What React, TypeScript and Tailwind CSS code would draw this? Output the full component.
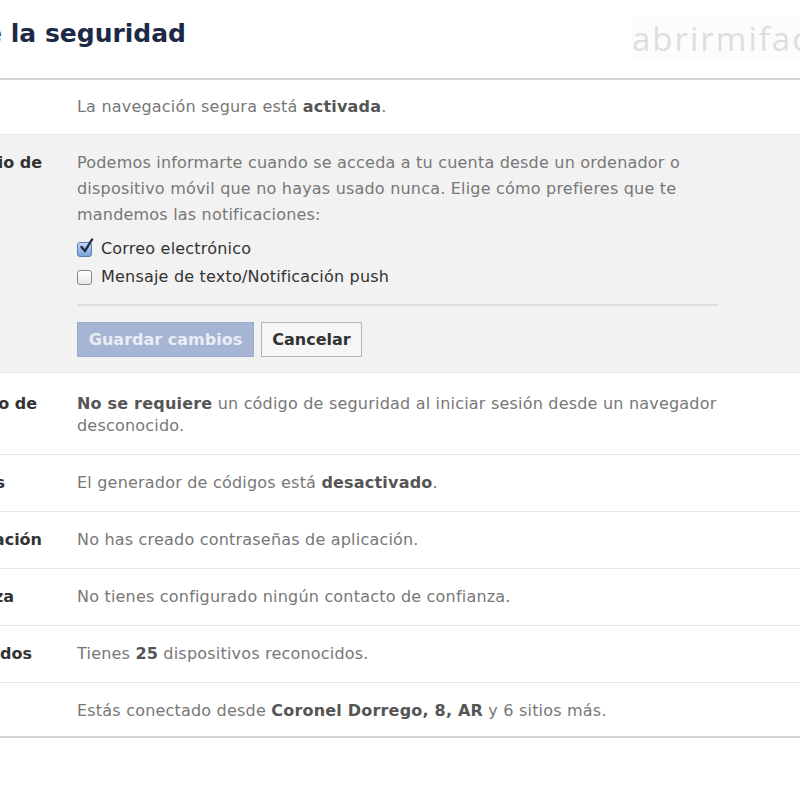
import React from "react";

const rows = [
  {
    label: "Generador de códigos",
    pad: "pr-[72px]",
    body: (
      <>
        El generador de códigos está <b className="font-bold text-[#555]">desactivado</b>.
      </>
    ),
  },
  {
    label: "Contraseñas de aplicación",
    pad: "pr-[35px]",
    body: <>No has creado contraseñas de aplicación.</>,
  },
  {
    label: "Contactos de confianza",
    pad: "pr-[63px]",
    body: <>No tienes configurado ningún contacto de confianza.</>,
  },
  {
    label: "Dispositivos reconocidos",
    pad: "pr-[45px]",
    body: (
      <>
        Tienes <b className="font-bold text-[#555]">25</b> dispositivos reconocidos.
      </>
    ),
  },
  {
    label: "Sesiones activas",
    pad: "pr-[77px]",
    body: (
      <>
        Estás conectado desde <b className="font-bold text-[#555]">Coronel Dorrego, 8, AR</b> y 6 sitios más.
      </>
    ),
  },
];

function Label({ text, pad }: { text: string; pad: string }) {
  return (
    <div className={`w-[77px] shrink-0 flex justify-end overflow-hidden whitespace-nowrap font-bold text-[#333] tracking-normal ${pad}`}>
      <span className="shrink-0">{text}</span>
    </div>
  );
}

function CheckBox({ checked }: { checked: boolean }) {
  return checked ? (
    <span className="relative shrink-0 inline-block w-[15px] h-[15px] rounded-[3px] border border-[#5a7fb5] bg-gradient-to-b from-[#c4d8f2] to-[#7aa2d8] mr-[9px]">
      <svg viewBox="0 0 16 16" className="absolute -top-[5px] left-[1px] w-[16px] h-[16px]">
        <path d="M2.5 9 L6 13 L13 1.5" fill="none" stroke="#1d2b4a" strokeWidth="2.4" strokeLinecap="round" strokeLinejoin="round" />
      </svg>
    </span>
  ) : (
    <span className="shrink-0 inline-block w-[15px] h-[15px] rounded-[3px] border border-[#8a8a8a] bg-gradient-to-b from-white to-[#e6e6e6] mr-[9px]" />
  );
}

export default function App() {
  return (
    <div className="w-[800px] h-[800px] bg-white overflow-hidden text-[16px] tracking-[0.2px] text-[#777]" style={{ fontFamily: '"DejaVu Sans", Verdana, sans-serif' }}>
      <div className="h-[78px] flex items-center">
        <div className="w-[186px] shrink-0 flex justify-end overflow-hidden whitespace-nowrap text-[25px] font-bold tracking-normal text-[#1d2a45] -mt-[10px]">
          <span className="shrink-0">Configuración de la seguridad</span>
        </div>
        <div className="ml-auto w-[168px] h-[44px] flex items-center overflow-hidden whitespace-nowrap bg-[#fcfcfc] text-[33px] tracking-[2px] text-[#dedede]" style={{ fontFamily: '"Open Sans", sans-serif' }}>
          abrirmifacebook
        </div>
      </div>
      <div className="border-t-2 border-[#d4d4d4]">
        <div className="flex py-[16px] leading-[22px] border-b border-[#e6e6e6]">
          <Label text="Navegación segura" pad="pr-[77px]" />
          <div>
            La navegación segura está <b className="font-bold text-[#555]">activada</b>.
          </div>
        </div>
        <div className="flex bg-[#f2f2f2] pt-[15px] pb-[15px] border-b border-[#e6e6e6] leading-[26px]">
          <Label text="Notificaciones de inicio de" pad="pr-[35px]" />
          <div className="w-[641px]">
            <p>
              Podemos informarte cuando se acceda a tu cuenta desde un ordenador o dispositivo móvil que no hayas usado nunca. Elige cómo prefieres que te mandemos las notificaciones:
            </p>
            <div className="mt-[7px] text-[#333] leading-[28px]">
              <label className="flex items-center">
                <CheckBox checked />
                Correo electrónico
              </label>
              <label className="flex items-center">
                <CheckBox checked={false} />
                Mensaje de texto/Notificación push
              </label>
            </div>
            <div className="mt-[13px] border-t-2 border-[#dedede]" />
            <div className="mt-[16px] flex gap-[7px]">
              <button className="h-[35px] w-[177px] bg-[#a6b5d3] border border-[#9cabc9] text-[#e9edf5] font-bold text-[16px] tracking-normal">
                Guardar cambios
              </button>
              <button className="h-[35px] w-[101px] bg-[#f6f6f6] border border-[#b5b5b5] text-[#333] font-bold text-[16px] tracking-normal">
                Cancelar
              </button>
            </div>
          </div>
        </div>
        <div className="flex pt-[20px] pb-[17px] leading-[22px] border-b border-[#e6e6e6]">
          <Label text="Aprobaciones de inicio de" pad="pr-[40px]" />
          <div className="w-[641px]">
            <b className="font-bold text-[#555]">No se requiere</b> un código de seguridad al iniciar sesión desde un navegador desconocido.
          </div>
        </div>
        {rows.map((r, i) => (
          <div key={i} className="flex pt-[17px] pb-[17px] last:pb-[14px] leading-[22px] border-b border-[#e6e6e6] last:border-b-0">
            <Label text={r.label} pad={r.pad} />
            <div>{r.body}</div>
          </div>
        ))}
      </div>
      <div className="border-t-2 border-[#d4d4d4]" />
    </div>
  );
}
